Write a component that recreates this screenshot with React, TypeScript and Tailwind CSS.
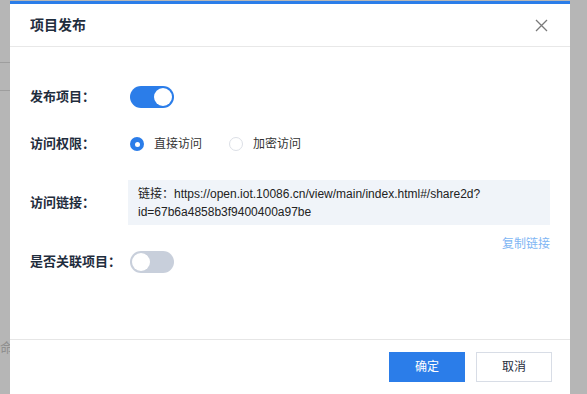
import React from 'react';

const font = { fontFamily: '"Liberation Sans", "Noto Sans CJK SC", sans-serif' };

const Switch: React.FC<{ on: boolean }> = ({ on }) => (
  <div
    className={`w-[44px] h-[22px] rounded-full p-[2px] flex items-center ${
      on ? 'bg-[#2b7de9] justify-end' : 'bg-[#c8cfdb] justify-start'
    }`}
  >
    <div className="w-[18px] h-[18px] rounded-full bg-white" />
  </div>
);

const Radio: React.FC<{ checked: boolean; label: string }> = ({ checked, label }) => (
  <div className="flex items-center">
    {checked ? (
      <div className="w-[14px] h-[14px] rounded-full bg-[#2b7de9] flex items-center justify-center">
        <div className="w-[5px] h-[5px] rounded-full bg-white" />
      </div>
    ) : (
      <div className="w-[14px] h-[14px] rounded-full border border-[#dcdfe6] bg-white" />
    )}
    <span className="ml-[10px] text-[12px] text-[#333]">{label}</span>
  </div>
);

const Label: React.FC<{ children: React.ReactNode }> = ({ children }) => (
  <div className="w-[100px] shrink-0 text-[13px] font-bold text-[#1f2d3d]">{children}</div>
);

export default function App() {
  return (
    <div className="w-[587px] h-[394px] bg-[#b6b6b6] flex overflow-hidden" style={font}>
      {/* backdrop strip */}
      <div className="w-[10px] shrink-0 flex flex-col">
        <div className="h-[62px]" />
        <div className="h-px bg-[#9e9e9e]" />
        <div className="h-[27px]" />
        <div className="h-px bg-[#9e9e9e]" />
        <div className="h-[250px]" />
        <div className="text-[13px] text-[#8f8f8f] leading-[14px]">命</div>
      </div>

      <div className="w-[560px] h-[393px] mt-[1px] bg-white border-t-[3px] border-[#2b7de9] flex flex-col">
        <div className="h-[43px] border-b border-[#e8e8e8] flex items-center justify-between pl-[20px] pr-[22px]">
          <span className="text-[14px] font-bold text-[#1f2d3d]">项目发布</span>
          <svg width="13" height="13" viewBox="0 0 13 13" fill="none" stroke="#7a7a7a" strokeWidth="1.3">
            <path d="M1 1L12 12M12 1L1 12" />
          </svg>
        </div>

        <div className="flex-1 pl-[20px] pr-[20px] pt-[39px] flex flex-col">
          <div className="flex items-center h-[22px]">
            <Label>发布项目：</Label>
            <Switch on />
          </div>

          <div className="flex items-center h-[22px] mt-[25px]">
            <Label>访问权限：</Label>
            <div className="flex items-center gap-[27px]">
              <Radio checked label="直接访问" />
              <Radio checked={false} label="加密访问" />
            </div>
          </div>

          <div className="flex items-center mt-[25px]">
            <Label>访问链接：</Label>
            <div className="ml-[-2px] flex-1 h-[45px] bg-[#f0f4f9] px-[10px] py-[5px] text-[12px] leading-[18px] text-[#222]">
              链接：https://open.iot.10086.cn/view/main/index.html#/share2d?
              <br />
              id=67b6a4858b3f9400400a97be
            </div>
          </div>

          <div className="mt-[12px] h-[14px] flex justify-end text-[12px] leading-[14px] text-[#80b6f4]">
            复制链接
          </div>

          <div className="flex items-center h-[22px]">
            <Label>是否关联项目：</Label>
            <Switch on={false} />
          </div>
        </div>

        <div className="h-[55px] border-t border-[#e6e6e6] flex items-center justify-end pr-[18px] gap-[11px]">
          <button className="w-[76px] h-[30px] bg-[#2b7de9] text-white text-[12px]">确定</button>
          <button className="w-[76px] h-[30px] border border-[#d8dde6] bg-white text-[12px] text-[#1f2d3d]">
            取消
          </button>
        </div>
      </div>
    </div>
  );
}
